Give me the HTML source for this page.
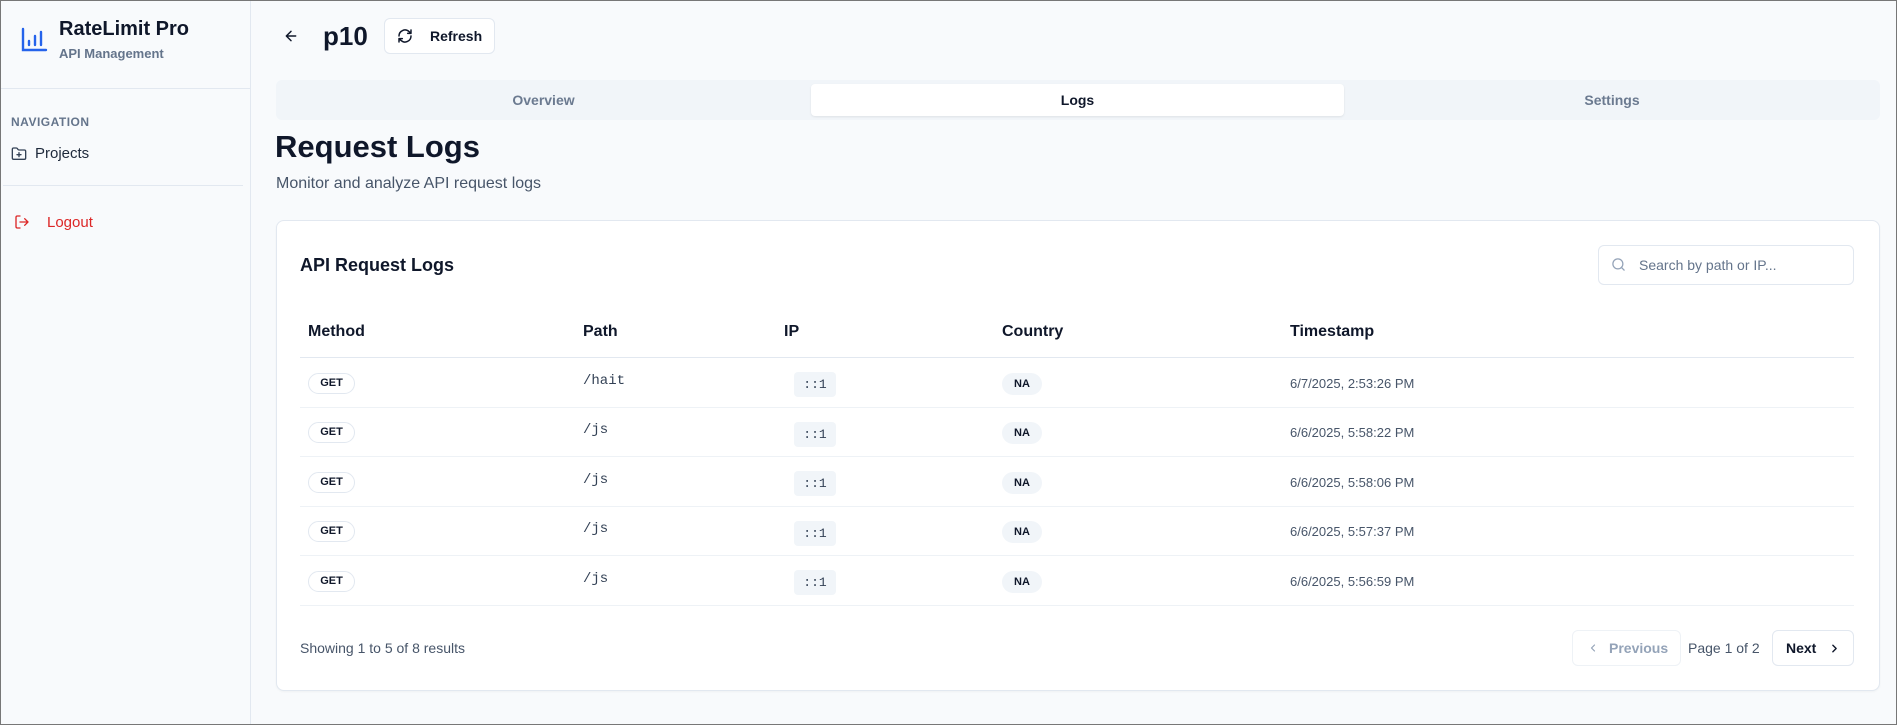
<!DOCTYPE html>
<html><head><meta charset="utf-8"><style>
*{box-sizing:border-box;margin:0;padding:0}
body{width:1897px;height:725px;overflow:hidden;background:#f8fafc;font-family:"Liberation Sans",sans-serif;color:#0f172a;position:relative}
.frame{position:absolute;inset:0;border:1px solid #777;pointer-events:none;z-index:10}
.a{position:absolute;white-space:nowrap}
.side{position:absolute;left:0;top:0;width:251px;height:725px;background:#f8fafc;border-right:1px solid #e2e8f0}
.hr{position:absolute;height:1px;background:#e2e8f0}
.card{position:absolute;left:276px;top:220px;width:1604px;height:471px;background:#fff;border:1px solid #e2e8f0;border-radius:8px;box-shadow:0 1px 2px rgba(0,0,0,.04)}
.th{font-size:16px;font-weight:bold;color:#0f172a}
.get{position:absolute;left:308px;width:47px;height:21px;border:1px solid #e2e8f0;border-radius:11px;font-size:11px;font-weight:bold;text-align:center;line-height:19px}
.path{position:absolute;left:583px;font-family:"Liberation Mono",monospace;font-size:14px;color:#334155}
.ip{position:absolute;left:794px;width:42px;height:25px;background:#f1f5f9;border-radius:4px;font-family:"Liberation Mono",monospace;font-size:13px;text-align:center;line-height:25px;color:#334155}
.na{position:absolute;left:1002px;width:40px;height:22px;background:#f1f5f9;border-radius:11px;font-size:11px;font-weight:bold;text-align:center;line-height:22px}
.ts{position:absolute;left:1290px;font-size:13px;color:#475569}
.btn{position:absolute;border:1px solid #e2e8f0;border-radius:6px;background:#fff;font-size:14px;font-weight:bold}
</style></head><body>
<div class="frame"></div>
<div class="side"></div>
<svg class="a" style="left:20px;top:27px" width="28" height="26" viewBox="0 0 28 26" fill="none" stroke="#2563eb" stroke-width="2.4" stroke-linecap="round"><path d="M3 2v21h23"/><path d="M9 18v-4M15 18V9M21 18V5"/></svg>
<div class="a" style="left:59px;top:18px;font-size:20px;font-weight:bold">RateLimit Pro</div>
<div class="a" style="left:59px;top:46px;font-size:13px;font-weight:bold;color:#64748b">API Management</div>
<div class="hr" style="left:0;top:88px;width:250px"></div>
<div class="a" style="left:11px;top:115px;font-size:12px;font-weight:bold;color:#64748b;letter-spacing:.5px">NAVIGATION</div>
<svg class="a" style="left:11px;top:146px" width="16" height="16" viewBox="0 0 24 24" fill="none" stroke="#334155" stroke-width="2" stroke-linecap="round" stroke-linejoin="round"><path d="M20 20a2 2 0 0 0 2-2V8a2 2 0 0 0-2-2h-7.9a2 2 0 0 1-1.7-.9l-.8-1.2A2 2 0 0 0 7.9 3H4a2 2 0 0 0-2 2v13a2 2 0 0 0 2 2Z"/><path d="M12 10v6M9 13h6"/></svg>
<div class="a" style="left:35px;top:145px;font-size:15px;color:#1e293b">Projects</div>
<div class="hr" style="left:3px;top:185px;width:240px"></div>
<svg class="a" style="left:14px;top:214px" width="16" height="16" viewBox="0 0 24 24" fill="none" stroke="#dc2626" stroke-width="2" stroke-linecap="round" stroke-linejoin="round"><path d="M9 21H5a2 2 0 0 1-2-2V5a2 2 0 0 1 2-2h4M16 17l5-5-5-5M21 12H9"/></svg>
<div class="a" style="left:47px;top:214px;font-size:15px;color:#dc2626">Logout</div>

<svg class="a" style="left:283px;top:28px" width="16" height="16" viewBox="0 0 24 24" fill="none" stroke="#0f172a" stroke-width="2.2" stroke-linecap="round" stroke-linejoin="round"><path d="M19 12H5M12 19l-7-7 7-7"/></svg>
<div class="a" style="left:323px;top:21px;font-size:26px;font-weight:bold">p10</div>
<div class="btn" style="left:384px;top:18px;width:111px;height:36px"></div>
<svg class="a" style="left:397px;top:28px" width="16" height="16" viewBox="0 0 24 24" fill="none" stroke="#0f172a" stroke-width="2.2" stroke-linecap="round" stroke-linejoin="round"><path d="M3 12a9 9 0 0 1 15-6.7L21 8M21 3v5h-5M21 12a9 9 0 0 1-15 6.7L3 16M8 16H3v5"/></svg>
<div class="a" style="left:430px;top:28px;font-size:14px;font-weight:bold">Refresh</div>

<div class="a" style="left:276px;top:80px;width:1604px;height:40px;background:#f1f5f9;border-radius:6px"></div>
<div class="a" style="left:811px;top:84px;width:533px;height:32px;background:#fff;border-radius:4px;box-shadow:0 1px 2px rgba(0,0,0,.08)"></div>
<div class="a" style="left:276px;top:92px;width:535px;text-align:center;font-size:14px;font-weight:bold;color:#6b7a90">Overview</div>
<div class="a" style="left:811px;top:92px;width:533px;text-align:center;font-size:14px;font-weight:bold">Logs</div>
<div class="a" style="left:1344px;top:92px;width:536px;text-align:center;font-size:14px;font-weight:bold;color:#6b7a90">Settings</div>

<div class="a" style="left:275px;top:129px;font-size:31px;font-weight:bold">Request Logs</div>
<div class="a" style="left:276px;top:175px;font-size:16px;color:#475569">Monitor and analyze API request logs</div>

<div class="card"></div>
<div class="a" style="left:300px;top:255px;font-size:18px;font-weight:bold">API Request Logs</div>
<div class="a" style="left:1598px;top:245px;width:256px;height:40px;border:1px solid #e2e8f0;border-radius:6px;background:#fff"></div>
<svg class="a" style="left:1611px;top:257px" width="15" height="15" viewBox="0 0 24 24" fill="none" stroke="#94a3b8" stroke-width="2" stroke-linecap="round"><circle cx="11" cy="11" r="8"/><path d="m21 21-4.3-4.3"/></svg>
<div class="a" style="left:1639px;top:257px;font-size:14px;color:#64748b">Search by path or IP...</div>

<div class="a th" style="left:308px;top:323px">Method</div>
<div class="a th" style="left:583px;top:323px">Path</div>
<div class="a th" style="left:784px;top:323px">IP</div>
<div class="a th" style="left:1002px;top:323px">Country</div>
<div class="a th" style="left:1290px;top:323px">Timestamp</div>
<div class="hr" style="left:300px;top:357px;width:1554px"></div>

<div class="get" style="top:373px">GET</div><div class="path" style="top:373px">/hait</div><div class="ip" style="top:372px">::1</div><div class="na" style="top:373px">NA</div><div class="ts" style="top:376px">6/7/2025, 2:53:26 PM</div>
<div class="hr" style="left:300px;top:407px;width:1554px;background:#eef2f6"></div>
<div class="get" style="top:422px">GET</div><div class="path" style="top:422px">/js</div><div class="ip" style="top:422px">::1</div><div class="na" style="top:422px">NA</div><div class="ts" style="top:425px">6/6/2025, 5:58:22 PM</div>
<div class="hr" style="left:300px;top:456px;width:1554px;background:#eef2f6"></div>
<div class="get" style="top:472px">GET</div><div class="path" style="top:472px">/js</div><div class="ip" style="top:471px">::1</div><div class="na" style="top:472px">NA</div><div class="ts" style="top:475px">6/6/2025, 5:58:06 PM</div>
<div class="hr" style="left:300px;top:506px;width:1554px;background:#eef2f6"></div>
<div class="get" style="top:521px">GET</div><div class="path" style="top:521px">/js</div><div class="ip" style="top:521px">::1</div><div class="na" style="top:521px">NA</div><div class="ts" style="top:524px">6/6/2025, 5:57:37 PM</div>
<div class="hr" style="left:300px;top:555px;width:1554px;background:#eef2f6"></div>
<div class="get" style="top:571px">GET</div><div class="path" style="top:571px">/js</div><div class="ip" style="top:570px">::1</div><div class="na" style="top:571px">NA</div><div class="ts" style="top:574px">6/6/2025, 5:56:59 PM</div>
<div class="hr" style="left:300px;top:605px;width:1554px;background:#eef2f6"></div>

<div class="a" style="left:300px;top:640px;font-size:14px;color:#475569">Showing 1 to 5 of 8 results</div>
<div class="btn" style="left:1572px;top:630px;width:109px;height:36px;color:#94a3b8;border-color:#eef2f6"><svg class="a" style="left:14px;top:11px" width="12" height="12" viewBox="0 0 24 24" fill="none" stroke="#94a3b8" stroke-width="2.4" stroke-linecap="round" stroke-linejoin="round"><path d="m15 18-6-6 6-6"/></svg><span class="a" style="left:36px;top:9px">Previous</span></div>
<div class="a" style="left:1688px;top:640px;font-size:14px;color:#475569">Page 1 of 2</div>
<div class="btn" style="left:1772px;top:630px;width:82px;height:36px"><span class="a" style="left:13px;top:9px">Next</span><svg class="a" style="left:55px;top:11px" width="13" height="13" viewBox="0 0 24 24" fill="none" stroke="#0f172a" stroke-width="2.6" stroke-linecap="round" stroke-linejoin="round"><path d="m9 18 6-6-6-6"/></svg></div>
</body></html>
